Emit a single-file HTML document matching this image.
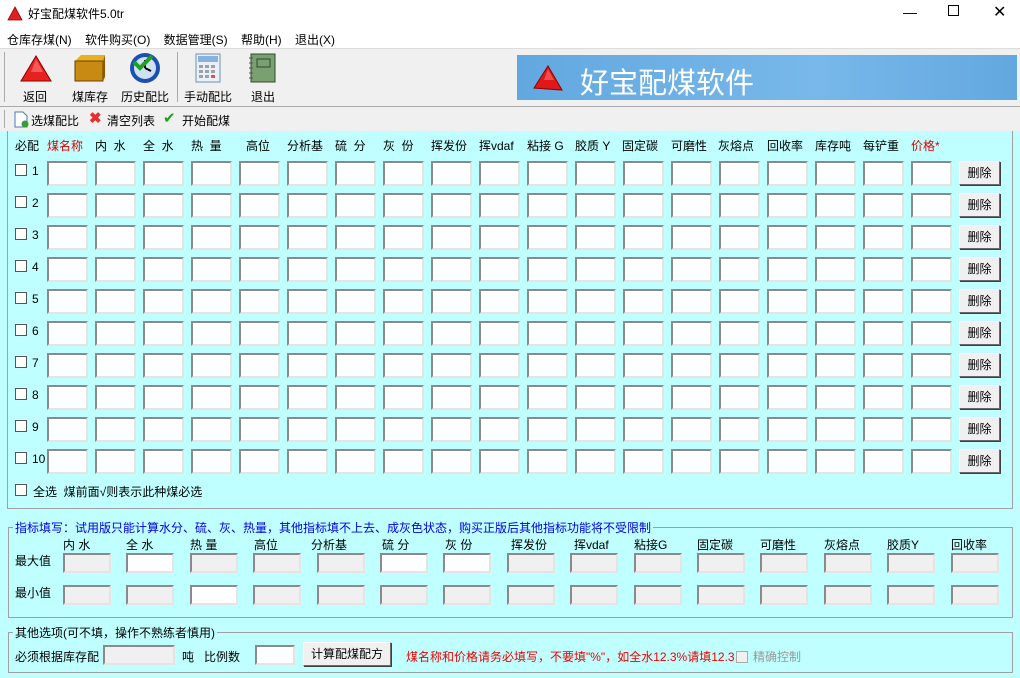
<!DOCTYPE html>
<html><head><meta charset="utf-8"><style>
*{margin:0;padding:0;box-sizing:border-box}
body{width:1020px;height:678px;position:relative;overflow:hidden;background:#c0ffff;font-family:"Liberation Sans","Noto Sans CJK SC","WenQuanYi Zen Hei",sans-serif;font-size:12px;color:#000}
.a{position:absolute;white-space:nowrap}
.box{position:absolute;background:#fff;border:2px solid;border-color:#8a8a8a #e4e4e4 #e4e4e4 #8a8a8a}
.gr{background:#f0f0f0}
.cb{position:absolute;width:12px;height:12px;background:#fff;border:1px solid #555}
.btn{position:absolute;width:41px;height:24px;background:#f0f0f0;border:1px solid;border-color:#fff #6a6a6a #6a6a6a #fff;box-shadow:1px 1px 0 #404040;text-align:center;line-height:22px;font-size:12px}
fieldset{position:absolute;border:1px solid #a0a0a0;border-radius:0}
legend{font-size:12px;padding:0 2px;margin-left:4px}
</style></head><body>
<div class="a" style="left:0;top:0;width:1020px;height:28px;background:#fff"></div>
<svg class="a" style="left:7px;top:6px" width="16" height="16"><polygon points="8,1 15,14 1,14" fill="#e02020" stroke="#900" stroke-width="0.8"/></svg>
<div class="a" style="left:28px;top:5px;font-size:12px">好宝配煤软件5.0tr</div>
<div class="a" style="left:903px;top:4px;font-size:14px">—</div>
<div class="a" style="left:948px;top:5px;width:11px;height:11px;border:1px solid #000"></div>
<div class="a" style="left:993px;top:2px;font-size:16px">✕</div>
<div class="a" style="left:0;top:28px;width:1020px;height:20px;background:#fff"></div>
<div class="a" style="left:7px;top:31px">仓库存煤(N)&nbsp;&nbsp;&nbsp; 软件购买(O)&nbsp;&nbsp;&nbsp; 数据管理(S)&nbsp;&nbsp;&nbsp; 帮助(H)&nbsp;&nbsp;&nbsp; 退出(X)</div>
<div class="a" style="left:0;top:48px;width:1020px;height:83px;background:#f0f0f0;border-top:1px solid #ddd"></div>
<div class="a" style="left:4px;top:52px;width:1px;height:50px;background:#aaa"></div>
<div class="a" style="left:177px;top:52px;width:1px;height:50px;background:#aaa"></div>
<div class="a" style="left:0;top:106px;width:1020px;height:1px;background:#aaa"></div>
<div class="a" style="left:4px;top:110px;width:1px;height:18px;background:#aaa"></div>
<svg class="a" style="left:19px;top:54px" width="34" height="30"><polygon points="17,2 32,27 2,27" fill="#e82020" stroke="#8a0000"/><polygon points="17,5 24,18 12,18" fill="#ff8080" opacity=".6"/></svg>
<svg class="a" style="left:73px;top:53px" width="34" height="30"><polygon points="2,8 8,2 32,2 30,8" fill="#e8b020"/><rect x="2" y="8" width="28" height="20" fill="#c88a10" stroke="#6a4000"/><polygon points="30,8 32,2 32,24 30,28" fill="#8a5a00"/></svg>
<svg class="a" style="left:128px;top:52px" width="34" height="32"><circle cx="17" cy="16" r="15" fill="#1a50b0"/><circle cx="17" cy="16" r="11" fill="#cfe0f0"/><path d="M17 16 L17 8 M17 16 L23 19" stroke="#000" stroke-width="2"/><path d="M6 10 L12 16 L24 4" stroke="#20a020" stroke-width="4" fill="none"/></svg>
<svg class="a" style="left:195px;top:53px" width="26" height="30"><rect x="1" y="1" width="24" height="28" fill="#e8f0f8" stroke="#7090b0"/><rect x="3" y="3" width="20" height="6" fill="#8ab0e0"/><g fill="#a0a0a0"><rect x="4" y="12" width="4" height="3"/><rect x="10" y="12" width="4" height="3"/><rect x="16" y="12" width="4" height="3"/><rect x="4" y="17" width="4" height="3"/><rect x="10" y="17" width="4" height="3"/><rect x="16" y="17" width="4" height="3"/><rect x="4" y="22" width="4" height="3"/><rect x="10" y="22" width="4" height="3"/><rect x="16" y="22" width="4" height="3" fill="#e05050"/></g></svg>
<svg class="a" style="left:248px;top:53px" width="28" height="30"><rect x="3" y="1" width="24" height="28" fill="#7aa070" stroke="#304a30"/><rect x="9" y="6" width="13" height="8" fill="none" stroke="#304a30"/><g stroke="#555"><line x1="1" y1="5" x2="5" y2="5"/><line x1="1" y1="10" x2="5" y2="10"/><line x1="1" y1="15" x2="5" y2="15"/><line x1="1" y1="20" x2="5" y2="20"/><line x1="1" y1="25" x2="5" y2="25"/></g></svg>
<div class="a" style="left:23px;top:88px">返回</div>
<div class="a" style="left:72px;top:88px">煤库存</div>
<div class="a" style="left:121px;top:88px">历史配比</div>
<div class="a" style="left:184px;top:88px">手动配比</div>
<div class="a" style="left:251px;top:88px">退出</div>
<div class="a" style="left:517px;top:55px;width:500px;height:45px;background:linear-gradient(90deg,#62a8e0,#78b8ea 60%,#62a8e0)"></div>
<svg class="a" style="left:532px;top:64px" width="32" height="28"><polygon points="16,2 30,26 2,24" fill="#e01818" stroke="#800"/><polygon points="16,5 22,16 12,16" fill="#ff7070" opacity=".6"/></svg>
<div class="a" style="left:580px;top:60px;font-size:29px;color:#fff">好宝配煤软件</div>
<svg class="a" style="left:13px;top:111px" width="16" height="17"><path d="M2 1h8l4 4v11H2z" fill="#fff" stroke="#4a7ab0"/><circle cx="12" cy="13" r="3.5" fill="#3a9a3a"/></svg>
<div class="a" style="left:31px;top:112px">选煤配比</div>
<div class="a" style="left:89px;top:109px;font-size:15px;color:#e03030;font-weight:bold">✖</div>
<div class="a" style="left:107px;top:112px">清空列表</div>
<div class="a" style="left:163px;top:109px;font-size:15px;color:#20a020">✔</div>
<div class="a" style="left:182px;top:112px">开始配煤</div>
<div class="a" style="left:7px;top:131px;width:1006px;height:378px;border:1px solid #a0a0a0;border-top:none"></div>
<div class="a" style="left:15px;top:137px">必配</div>
<div class="a" style="left:47px;top:137px;color:#e00000">煤名称</div>
<div class="a" style="left:95px;top:137px">内&nbsp; 水</div>
<div class="a" style="left:143px;top:137px">全&nbsp; 水</div>
<div class="a" style="left:191px;top:137px">热&nbsp; 量</div>
<div class="a" style="left:246px;top:137px">高位</div>
<div class="a" style="left:287px;top:137px">分析基</div>
<div class="a" style="left:335px;top:137px">硫&nbsp; 分</div>
<div class="a" style="left:383px;top:137px">灰&nbsp; 份</div>
<div class="a" style="left:431px;top:137px">挥发份</div>
<div class="a" style="left:479px;top:137px">挥vdaf</div>
<div class="a" style="left:527px;top:137px">粘接 G</div>
<div class="a" style="left:575px;top:137px">胶质 Y</div>
<div class="a" style="left:622px;top:137px">固定碳</div>
<div class="a" style="left:671px;top:137px">可磨性</div>
<div class="a" style="left:718px;top:137px">灰熔点</div>
<div class="a" style="left:767px;top:137px">回收率</div>
<div class="a" style="left:815px;top:137px">库存吨</div>
<div class="a" style="left:863px;top:137px">每铲重</div>
<div class="a" style="left:911px;top:137px;color:#e00000">价格*</div>
<div id="grid"></div>
<div class="a" style="left:32px;top:164px">1</div><div class="a" style="left:32px;top:196px">2</div><div class="a" style="left:32px;top:228px">3</div><div class="a" style="left:32px;top:260px">4</div><div class="a" style="left:32px;top:292px">5</div><div class="a" style="left:32px;top:324px">6</div><div class="a" style="left:32px;top:356px">7</div><div class="a" style="left:32px;top:388px">8</div><div class="a" style="left:32px;top:420px">9</div><div class="a" style="left:32px;top:452px">10</div>
<div class="btn" style="left:959px;top:161px">删除</div><div class="btn" style="left:959px;top:193px">删除</div><div class="btn" style="left:959px;top:225px">删除</div><div class="btn" style="left:959px;top:257px">删除</div><div class="btn" style="left:959px;top:289px">删除</div><div class="btn" style="left:959px;top:321px">删除</div><div class="btn" style="left:959px;top:353px">删除</div><div class="btn" style="left:959px;top:385px">删除</div><div class="btn" style="left:959px;top:417px">删除</div><div class="btn" style="left:959px;top:449px">删除</div>
<div class="cb" style="left:15px;top:484px"></div>
<div class="a" style="left:33px;top:483px">全选&nbsp; 煤前面√则表示此种煤必选</div>
<fieldset style="left:8px;top:519px;width:1005px;height:99px"><legend style="color:#0000e0">指标填写：试用版只能计算水分、硫、灰、热量，其他指标填不上去、成灰色状态，购买正版后其他指标功能将不受限制</legend></fieldset>
<div class="a" style="left:63px;top:536px">内 水</div><div class="a" style="left:126px;top:536px">全 水</div><div class="a" style="left:190px;top:536px">热 量</div><div class="a" style="left:254px;top:536px">高位</div><div class="a" style="left:311px;top:536px">分析基</div><div class="a" style="left:382px;top:536px">硫 分</div><div class="a" style="left:445px;top:536px">灰 份</div><div class="a" style="left:511px;top:536px">挥发份</div><div class="a" style="left:574px;top:536px">挥vdaf</div><div class="a" style="left:634px;top:536px">粘接G</div><div class="a" style="left:697px;top:536px">固定碳</div><div class="a" style="left:760px;top:536px">可磨性</div><div class="a" style="left:824px;top:536px">灰熔点</div><div class="a" style="left:887px;top:536px">胶质Y</div><div class="a" style="left:951px;top:536px">回收率</div>
<div class="a" style="left:15px;top:552px">最大值</div>
<div class="a" style="left:15px;top:584px">最小值</div>
<div id="g2"></div>
<fieldset style="left:8px;top:624px;width:1005px;height:49px"><legend>其他选项(可不填，操作不熟练者慎用)</legend></fieldset>
<div class="a" style="left:15px;top:648px">必须根据库存配</div>
<div class="box gr" style="left:103px;top:645px;width:72px;height:20px"></div>
<div class="a" style="left:182px;top:648px">吨&nbsp;&nbsp; 比例数</div>
<div class="box" style="left:255px;top:645px;width:40px;height:20px"></div>
<div class="btn" style="left:303px;top:642px;width:88px;height:24px">计算配煤配方</div>
<div class="a" style="left:406px;top:648px;color:#f00000">煤名称和价格请务必填写，不要填"%"，如全水12.3%请填12.3</div>
<div class="cb" style="left:736px;top:651px;border-color:#aaa;background:#f0f0f0"></div>
<div class="a" style="left:753px;top:648px;color:#999">精确控制</div>
<script>
var h='';
for(var r=0;r<10;r++){var y=161+r*32;h+='<div class="cb" style="left:15px;top:'+(y+3)+'px"></div>';
for(var c=0;c<19;c++){h+='<div class="box" style="left:'+(47+c*48)+'px;top:'+y+'px;width:41px;height:25px"></div>';}}
document.getElementById('grid').innerHTML=h;
var w=[1,0,1,1,1,0,0,1,1,1,1,1,1,1,1],m=[1,1,0,1,1,1,1,1,1,1,1,1,1,1,1],g='';
for(var i=0;i<15;i++){var x=Math.round(63+i*63.4);
g+='<div class="box'+(w[i]?' gr':'')+'" style="left:'+x+'px;top:553px;width:48px;height:20px"></div>';
g+='<div class="box'+(m[i]?' gr':'')+'" style="left:'+x+'px;top:585px;width:48px;height:20px"></div>';}
document.getElementById('g2').innerHTML=g;
</script>
</body></html>
